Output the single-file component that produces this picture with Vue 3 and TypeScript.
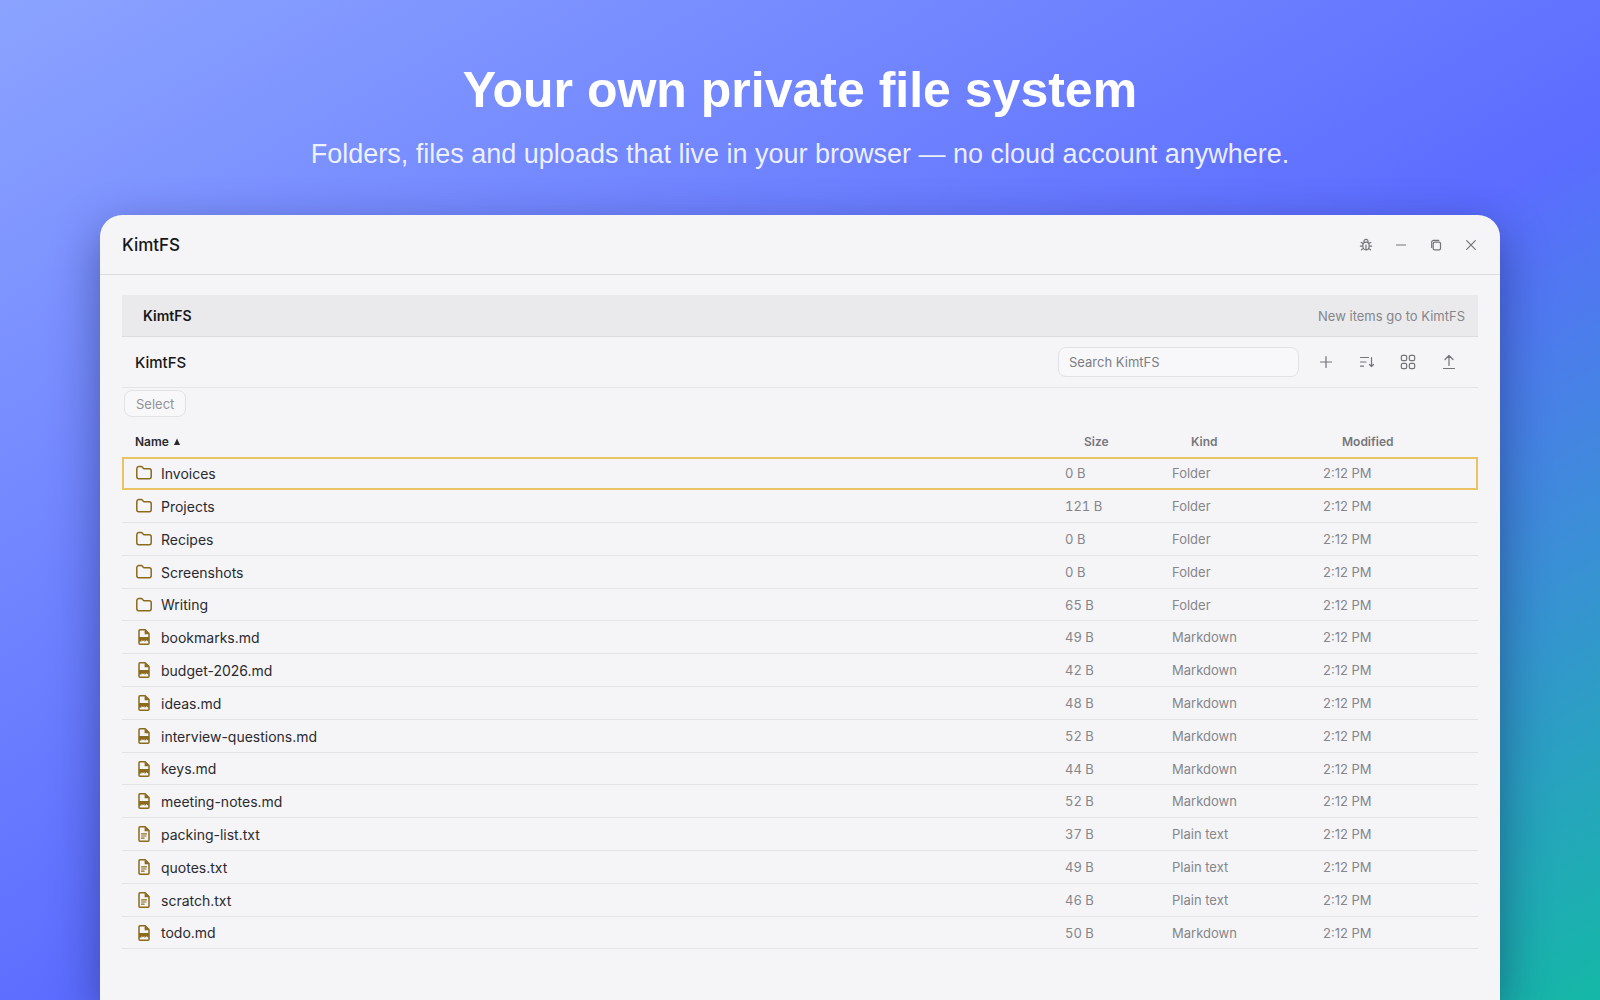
<script setup lang="ts">
import { ref } from 'vue'

type IconKind = 'folder' | 'markdown' | 'text'

interface Entry {
  name: string
  size: string
  kind: string
  icon: IconKind
}

const labels: Record<IconKind, string> = {
  folder: 'Folder',
  markdown: 'Markdown',
  text: 'Plain text',
}

const entry = (name: string, size: string, icon: IconKind): Entry => ({
  name,
  size,
  icon,
  kind: labels[icon],
})

const entries: Entry[] = [
  entry('Invoices', '0 B', 'folder'),
  entry('Projects', '121 B', 'folder'),
  entry('Recipes', '0 B', 'folder'),
  entry('Screenshots', '0 B', 'folder'),
  entry('Writing', '65 B', 'folder'),
  entry('bookmarks.md', '49 B', 'markdown'),
  entry('budget-2026.md', '42 B', 'markdown'),
  entry('ideas.md', '48 B', 'markdown'),
  entry('interview-questions.md', '52 B', 'markdown'),
  entry('keys.md', '44 B', 'markdown'),
  entry('meeting-notes.md', '52 B', 'markdown'),
  entry('packing-list.txt', '37 B', 'text'),
  entry('quotes.txt', '49 B', 'text'),
  entry('scratch.txt', '46 B', 'text'),
  entry('todo.md', '50 B', 'markdown'),
]

const focused = ref('Invoices')
const query = ref('')
</script>

<template>
  <div class="page">
    <header class="hero">
      <h1>Your own private file system</h1>
      <p>Folders, files and uploads that live in your browser — no cloud account anywhere.</p>
    </header>

    <main class="window">
      <div class="titlebar">
        <h2>KimtFS</h2>
        <div class="controls">
          <button type="button" aria-label="Report a bug">
            <svg viewBox="0 0 14 14" width="14" height="14">
              <path d="M5 4.2V3.4a2 2 0 0 1 4 0v.8M7 4.2c2 0 3.2 1.3 3.2 3.6S9 12 7 12s-3.2-1.9-3.2-4.2S5 4.2 7 4.2zM7 7v5M4.2 5.6 2.2 4.4M9.8 5.6l2-1.2M3.8 8.2H1.4M10.2 8.2h2.4M4.4 10.4l-2 1.4M9.6 10.4l2 1.4" />
            </svg>
          </button>
          <button type="button" aria-label="Minimize">
            <svg viewBox="0 0 14 14" width="14" height="14"><path d="M2.5 7h9" /></svg>
          </button>
          <button type="button" aria-label="Restore">
            <svg viewBox="0 0 14 14" width="14" height="14">
              <rect x="4.2" y="4.2" width="7.3" height="7.6" rx="1.4" />
              <path d="M2.7 9.5V4a1.6 1.6 0 0 1 1.6-1.6h5.4" />
            </svg>
          </button>
          <button type="button" aria-label="Close">
            <svg viewBox="0 0 14 14" width="14" height="14"><path d="m2.7 2.7 8.6 8.6M11.3 2.7l-8.6 8.6" /></svg>
          </button>
        </div>
      </div>

      <div class="content">
        <div class="pathbar">
          <strong>KimtFS</strong>
          <span>New items go to KimtFS</span>
        </div>

        <div class="toolbar">
          <h3>KimtFS</h3>
          <div class="actions">
            <input v-model="query" type="text" placeholder="Search KimtFS" aria-label="Search KimtFS" />
            <button type="button" aria-label="New">
              <svg viewBox="0 0 18 18" width="18" height="18"><path d="M9 3.5v11M3.5 9h11" /></svg>
            </button>
            <button type="button" aria-label="Sort">
              <svg viewBox="0 0 18 18" width="18" height="18">
                <path d="M2.5 4.5h8M2.5 9h5.5M2.5 13.2h3M13.5 4.5v9M11.5 11.5l2 2 2-2" />
              </svg>
            </button>
            <button type="button" aria-label="Grid view">
              <svg viewBox="0 0 18 18" width="18" height="18">
                <rect x="2.3" y="2.3" width="5.4" height="5.4" rx="1.6" />
                <rect x="10.3" y="2.3" width="5.4" height="5.4" rx="1.6" />
                <rect x="2.3" y="10.3" width="5.4" height="5.4" rx="1.6" />
                <rect x="10.3" y="10.3" width="5.4" height="5.4" rx="1.6" />
              </svg>
            </button>
            <button type="button" aria-label="Upload">
              <svg viewBox="0 0 18 18" width="18" height="18">
                <path d="M9 12.5V2.5M5 6.5l4-4 4 4M3.5 15.5h11" />
              </svg>
            </button>
          </div>
        </div>

        <div class="selectbar">
          <button type="button">Select</button>
        </div>

        <table>
          <thead>
            <tr>
              <th class="name" scope="col" aria-sort="ascending">
                <span>Name</span>
                <svg viewBox="0 0 8 8" width="8" height="8"><path d="M4 0.5 7 7H1z" /></svg>
              </th>
              <th class="size" scope="col">Size</th>
              <th class="kind" scope="col">Kind</th>
              <th class="modified" scope="col">Modified</th>
            </tr>
          </thead>
          <tbody>
            <tr
              v-for="item in entries"
              :key="item.name"
              :class="{ focused: item.name === focused }"
              @click="focused = item.name"
            >
              <td class="name">
                <div class="file">
                  <svg v-if="item.icon === 'folder'" viewBox="0 0 18 18" width="18" height="18">
                    <path d="M1.8 4.6a2 2 0 0 1 2-2h2.4a1.6 1.6 0 0 1 1.3.7l.8 1.1a1 1 0 0 0 .8.4h5.1a2 2 0 0 1 2 2v6a2 2 0 0 1-2 2H3.8a2 2 0 0 1-2-2z" />
                  </svg>
                  <svg v-else viewBox="0 0 18 18" width="18" height="18">
                    <path d="M4 2.8a1 1 0 0 1 1-1h5.2L14 5.6v9.6a1 1 0 0 1-1 1H5a1 1 0 0 1-1-1z" />
                    <path class="solid" d="M9.6 1.8v4.4H14z" />
                    <path
                      v-if="item.icon === 'markdown'"
                      class="solid"
                      d="M4 9h10v4.6h-1l-1.4-1.4-1.4 1.4H9.4V12L8 13.2 6.6 12v1.6H4z"
                    />
                    <path v-else class="lines" d="M6.5 8.8h5M6.5 11h4.5M6.5 13.2h2.6" />
                  </svg>
                  <span>{{ item.name }}</span>
                </div>
              </td>
              <td class="size">{{ item.size }}</td>
              <td>{{ item.kind }}</td>
              <td>2:12 PM</td>
            </tr>
          </tbody>
        </table>
      </div>
    </main>
  </div>
</template>

<style>
body {
  margin: 0;
}
</style>

<style scoped>
.page {
  box-sizing: border-box;
  min-height: 100vh;
  display: flex;
  flex-direction: column;
  padding: 0 100px;
  overflow: hidden;
  background: linear-gradient(150deg, #8ba3ff 0%, #5b6cff 55%, #14b8a6 100%);
  font-family: Inter, "Liberation Sans", sans-serif;
  color: #17171a;
}

.hero {
  padding: 60px 0 43px;
  text-align: center;
  font-family: "Liberation Sans", Arial, sans-serif;
  color: #fff;
}

h1 {
  margin: 0;
  font-size: 50px;
  line-height: 60px;
}

.hero p {
  margin: 16px 0 0;
  font-size: 27px;
  line-height: 36px;
  color: rgba(255, 255, 255, 0.88);
}

.window {
  flex: 1;
  border-radius: 22px 22px 0 0;
  background: #f5f5f8;
  box-shadow: 0 16px 48px rgba(15, 20, 70, 0.45);
}

.titlebar {
  display: flex;
  align-items: center;
  justify-content: space-between;
  height: 59px;
  padding: 0 22px;
  border-bottom: 1px solid #dedee2;
}

h2,
h3 {
  margin: 0;
  font-weight: 500;
}

h2 {
  font-size: 17px;
}

h3 {
  font-size: 15px;
}

button {
  padding: 0;
  border: 0;
  background: none;
  font: inherit;
  color: inherit;
}

svg {
  display: block;
  fill: none;
  stroke: currentColor;
  stroke-width: 1.2;
  stroke-linecap: round;
  stroke-linejoin: round;
}

.controls {
  display: flex;
  gap: 21px;
  color: #737378;
}

.content {
  padding: 20px 22px;
}

.pathbar {
  display: flex;
  align-items: center;
  justify-content: space-between;
  height: 41px;
  padding: 0 13px 0 21px;
  border-bottom: 1px solid #dcdcdf;
  background: #eaeaec;
  font-size: 13px;
}

.pathbar strong {
  font-size: 14px;
  font-weight: 600;
}

.pathbar span {
  color: #85858a;
}

.toolbar {
  display: flex;
  align-items: center;
  justify-content: space-between;
  height: 50px;
  padding: 0 20px 0 13px;
  border-bottom: 1px solid #e4e4e7;
}

.actions {
  display: flex;
  align-items: center;
  gap: 23px;
  color: #737378;
}

.actions input {
  box-sizing: border-box;
  width: 241px;
  height: 30px;
  margin-right: -5px;
  padding: 0 10px;
  border: 1px solid #e2e2e6;
  border-radius: 8px;
  background: #f8f8fa;
  font: 13px Inter, sans-serif;
  color: inherit;
}

.actions input::placeholder {
  color: #7d7d82;
  opacity: 1;
}

.selectbar {
  padding: 2px 2px 8px;
}

.selectbar button {
  height: 27px;
  padding: 0 11px;
  border: 1px solid #e2e2e6;
  border-radius: 8px;
  background: #f8f8fa;
  font-size: 13px;
  color: #929297;
}

table {
  width: 100%;
  table-layout: fixed;
  border-collapse: separate;
  border-spacing: 0;
}

th {
  height: 32px;
  padding: 0 0 0 19px;
  text-align: left;
  font-size: 12px;
  font-weight: 600;
  color: #77777c;
}

th.name {
  padding-left: 13px;
  color: #2a2a2e;
}

th.name svg {
  display: inline-block;
  margin-left: 4px;
  fill: currentColor;
  stroke: none;
}

th.size {
  width: 88px;
}

th.kind {
  width: 132px;
}

th.modified {
  width: 136px;
}

td {
  box-sizing: border-box;
  height: 33px;
  padding: 0;
  border-bottom: 1px solid #e4e4e7;
  font-size: 13px;
  color: #85858a;
}

tr:nth-child(5n) td {
  height: 32px;
}

td.name {
  padding-left: 13px;
  font-size: 14px;
  color: #2a2a2e;
}

td.size {
  font-variant-numeric: tabular-nums;
}

.focused td {
  border-color: transparent;
}

.focused {
  outline: 2px solid #e9c465;
  outline-offset: -2px;
}

.file {
  display: flex;
  align-items: center;
  gap: 8px;
}

.file svg {
  stroke: #8a6a1c;
  stroke-width: 1.5;
}

.file .solid {
  fill: #8a6a1c;
  stroke: none;
}

.file .lines {
  stroke-width: 1.2;
}
</style>
